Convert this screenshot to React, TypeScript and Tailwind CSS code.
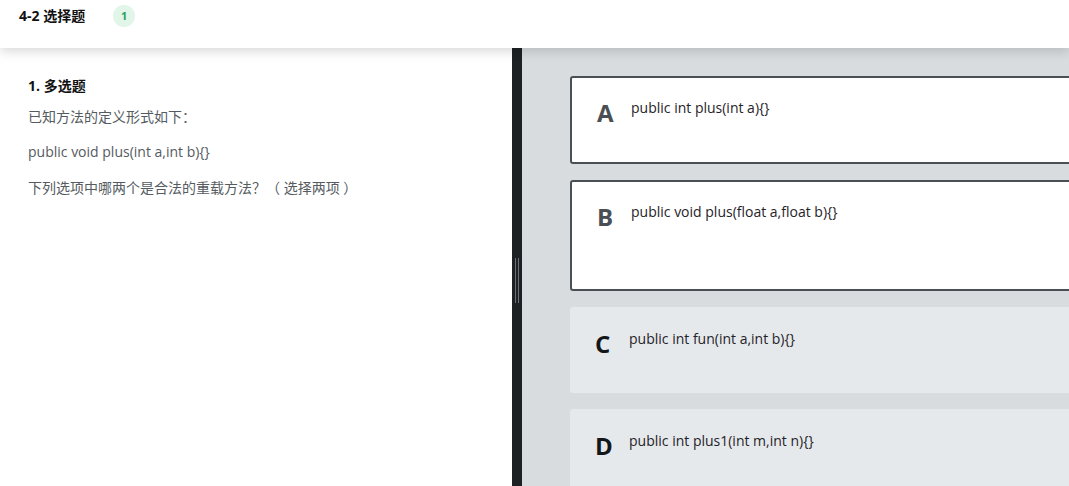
import React from 'react';

type Option = { key: string; text: string; selected: boolean; tall?: boolean };

const OPTIONS: Option[] = [
  { key: 'A', text: 'public int plus(int a){}', selected: true },
  { key: 'B', text: 'public void plus(float a,float b){}', selected: true, tall: true },
  { key: 'C', text: 'public int fun(int a,int b){}', selected: false },
  { key: 'D', text: 'public int plus1(int m,int n){}', selected: false },
];

const font = { fontFamily: '"Open Sans", "Noto Sans CJK SC", sans-serif' };

const OptionCard: React.FC<{ option: Option }> = ({ option }) => (
  <div
    className={
      option.selected
        ? `flex items-start rounded-[3px] border-2 border-[#4a4f56] bg-white pl-[25px] pt-[20px] ${option.tall ? 'h-[111px]' : 'h-[88px]'}`
        : 'flex items-start rounded-[3px] bg-[#e6e9ec] pl-[25px] pt-[22px] h-[86px]'
    }
  >
    <span
      className={`w-[34px] text-[24px] font-bold leading-[30px] ${option.selected ? 'text-[#4a4f56]' : 'text-[#14171a]'}`}
    >
      {option.key}
    </span>
    <span className="text-[14px] leading-[20px] text-[#1f2328]">{option.text}</span>
  </div>
);

const App: React.FC = () => {
  return (
    <div className="flex h-[486px] w-[1069px] flex-col overflow-hidden bg-white" style={font}>
      {/* Header */}
      <header className="relative z-10 flex h-[48px] shrink-0 items-start bg-white pl-[19px] pt-[6px] shadow-[0_4px_10px_rgba(0,0,0,0.14)]">
        <h1 className="text-[14px] font-bold leading-[20px] text-[#111]">4-2 选择题</h1>
        <span className="ml-[28px] mt-[-1px] flex h-[22px] w-[22px] items-center justify-center rounded-full bg-[#e1f5e8] text-[11px] font-bold text-[#2f9e5c]">
          1
        </span>
      </header>

      <div className="flex min-h-0 flex-1">
        {/* Question */}
        <section className="w-[512px] shrink-0 bg-white pl-[28px] pt-[28px] text-[14px] text-[#555b61]">
          <h2 className="mb-[11px] leading-[20px] font-bold text-[#111]">1. 多选题</h2>
          <p className="mb-[15px] leading-[20px]">已知方法的定义形式如下：</p>
          <p className="mb-[16px] leading-[20px]">{'public void plus(int a,int b){}'}</p>
          <p className="leading-[20px]">下列选项中哪两个是合法的重载方法？（ 选择两项 ）</p>
        </section>

        {/* Divider */}
        <div className="flex w-[10px] shrink-0 items-center bg-[#1e2124] pl-[3px]">
          <div className="mt-[26px] flex h-[45px] gap-[2px]">
            <div className="w-px bg-[#6b7076]" />
            <div className="w-px bg-[#6b7076]" />
          </div>
        </div>

        {/* Options */}
        <section className="flex-1 bg-[#d9dcdf] pl-[48px] pt-[28px]">
          <div className="-mr-[40px] flex flex-col gap-[16px]">
            {OPTIONS.map(o => (
              <OptionCard key={o.key} option={o} />
            ))}
          </div>
        </section>
      </div>
    </div>
  );
};

export default App;
